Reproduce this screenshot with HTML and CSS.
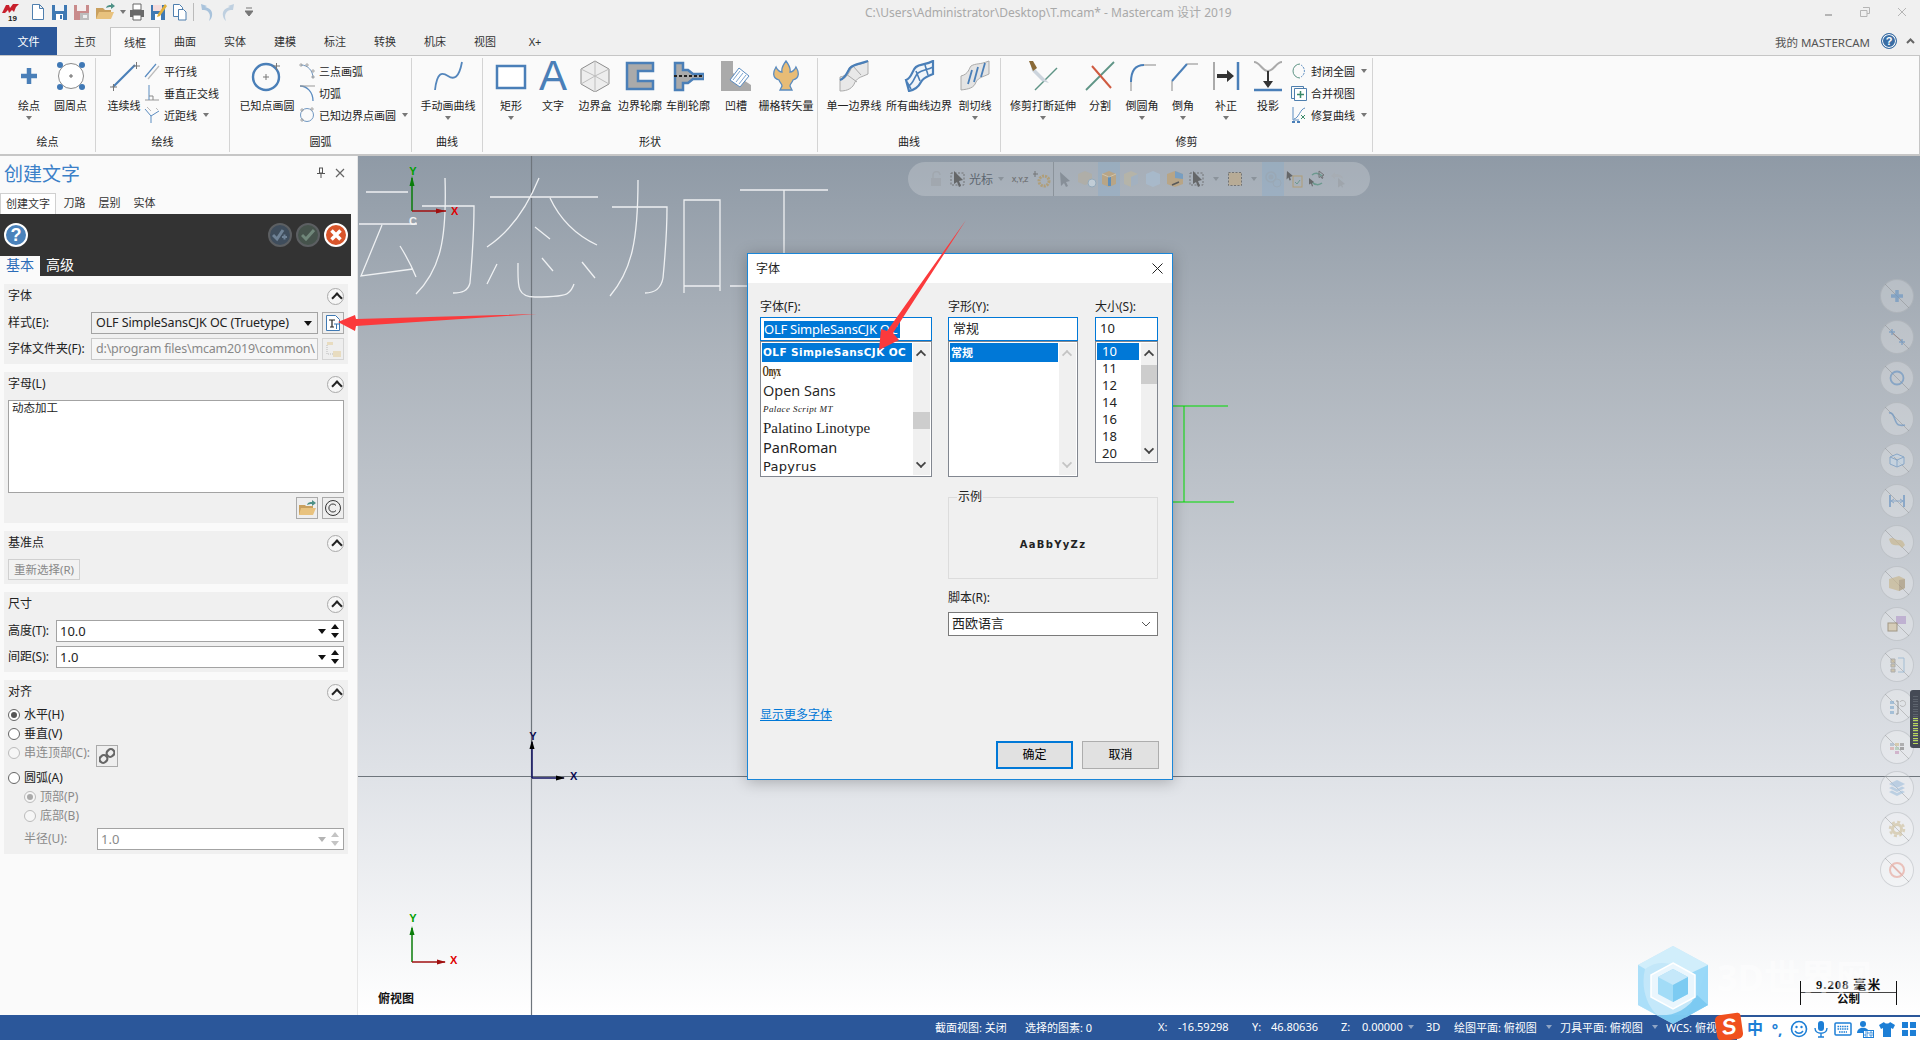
FILE: index.html
```html
<!DOCTYPE html>
<html lang="zh-CN">
<head>
<meta charset="utf-8">
<title>Mastercam</title>
<link rel="stylesheet" href="styles.css">
</head>
<body>
<div class="app">
  <header class="titlebar">
    <div class="qat">
      <svg class="logo" width="18" height="18" viewBox="0 0 18 18"><path d="M0 10 4 2h3l1 3 3-4h6l-3 3-2 5-2-2-3 3-1-3-3 3z" fill="#c8202c"/><text x="6" y="17.500" class="logo-num">19</text></svg>
      <svg width="16" height="18" viewBox="0 0 16 18"><path d="M2.500 1.500h7l4 4v11h-11z M9.500 1.500v4h4" fill="#fff" stroke="#4f7fae"/></svg>
      <svg width="17" height="18" viewBox="0 0 17 18"><path d="M1 2h15v15H1z" fill="#3f79b3"/><path d="M4 2h9v6H4z" fill="#eef3f8"/><path d="M5 11h7v6H5z" fill="#fff"/><path d="M9 12h2v4H9z" fill="#3f79b3"/></svg>
      <svg width="17" height="18" viewBox="0 0 17 18"><path d="M1 2h15v15H1z" fill="#c98b8b"/><path d="M4 2h9v6H4z" fill="#f4eeee"/><path d="M7 10h9v7H7z" fill="#bcbcbc"/><path d="M10 12h4v3h-4z" fill="#eee"/></svg>
      <svg width="20" height="18" viewBox="0 0 20 18"><path d="M1 5h7l2 2h6v9H1z" fill="#c9a05e"/><path d="M1 16 4 9h15l-3 7z" fill="#e8c27e"/><path d="M11 5c1-3 3-3 5-3V0l4 3-4 3V4c-2 0-3 0-5 1z" fill="#4d9086"/></svg>
      <i class="caret qcaret"></i>
      <svg width="16" height="18" viewBox="0 0 16 18"><path d="M4 1h8v6H4z" fill="#fff" stroke="#666"/><path d="M1 7h14v7H1z" fill="#6a6a6a"/><path d="M4 12h8v5H4z" fill="#fff" stroke="#666"/></svg>
      <svg width="17" height="18" viewBox="0 0 17 18"><path d="M1 2h14v15H1z" fill="#3f79b3"/><path d="M3 2h9v6H3z" fill="#f4dcdc"/><path d="M5 11h6v6H5z" fill="#fff"/><path d="m15 1 2 2-7 10-3 1 1-3z" fill="#e2b13c"/></svg>
      <svg width="15" height="18" viewBox="0 0 15 18"><path d="M1.500 1.500h6l3 3v9h-9z" fill="#fff" stroke="#4f7fae"/><path d="M6.500 6.500h5l2.500 2.500v8h-7.500z" fill="#fff" stroke="#4f7fae"/></svg>
      <i class="qsep"></i>
      <svg width="14" height="18" viewBox="0 0 14 18"><path d="M2 7 1 1l6 2-2 1c5 1 8 4 7 9-.4 2-1 3-3 5 1-3 1.500-6 0-8-1-2-3-3-5-3z" fill="#a9c3dc"/></svg>
      <svg class="redo" width="14" height="18" viewBox="0 0 14 18"><path d="m12 7 1-6-6 2 2 1C4 5 1 8 2 13c.4 2 1 3 3 5-1-3-1.500-6 0-8 1-2 3-3 5-3z" fill="#bfd0e0"/></svg>
      <svg class="qmore" width="8" height="10" viewBox="0 0 8 10"><path d="M1 1h6M0 4h8L4 9z" stroke="#777" fill="#777" stroke-width="1"/></svg>
    </div>
    <div class="doc-title">C:\Users\Administrator\Desktop\T.mcam* - Mastercam 设计 2019</div>
    <div class="winbtns">
      <svg width="10" height="10" viewBox="0 0 10 10"><path d="M2 8h7" stroke="#b5b5b5" stroke-width="2"/></svg>
      <svg width="10" height="10" viewBox="0 0 10 10"><path d="M3 .5h6.500v6H7M.5 3.500H7v6H.5z" fill="none" stroke="#b5b5b5"/></svg>
      <svg width="10" height="10" viewBox="0 0 10 10"><path d="m1 1 8 8M9 1 1 9" stroke="#b5b5b5"/></svg>
    </div>
  </header>

  <nav class="tabs">
    <div class="tab-file">文件</div>
    <div class="tab">主页</div><div class="tab active">线框</div><div class="tab">曲面</div><div class="tab">实体</div><div class="tab">建模</div><div class="tab">标注</div><div class="tab">转换</div><div class="tab">机床</div><div class="tab">视图</div><div class="tab">X+</div>
    <div class="tabs-right">
      <span class="my">我的 MASTERCAM</span>
      <span class="help-mini">?</span>
      <svg width="9" height="6" viewBox="0 0 9 6"><path d="M1 5 4.500 1.500 8 5" fill="none" stroke="#666" stroke-width="2"/></svg>
    </div>
  </nav>

  <section class="ribbon">
    <div class="group g1">
      <div class="items">
        <div class="big"><svg width="32" height="32" viewBox="0 0 32 32"><path d="M16 8v16M8 16h16" stroke="#4a7fb8" stroke-width="4.500"/></svg><span>绘点</span><i class="caret"></i></div>
        <div class="big"><svg width="32" height="32" viewBox="0 0 32 32"><circle cx="16" cy="16" r="12.500" fill="#fff" stroke="#8a8a8a"/><path d="M14 16h4M16 14v4" stroke="#666"/><g fill="#3f78b5"><circle cx="5" cy="5" r="3"/><circle cx="27" cy="5" r="3"/><circle cx="5" cy="27" r="3"/><circle cx="27" cy="27" r="3"/></g></svg><span>圆周点</span></div>
      </div>
      <div class="glabel">绘点</div>
    </div>
    <div class="group g2">
      <div class="items">
        <div class="big"><svg width="32" height="32" viewBox="0 0 32 32"><path d="m5 27 22-22" stroke="#4a7fb8" stroke-width="2.200"/><path d="M2 27h7M5.500 24v7M25 6h7M28.500 2v7" stroke="#777"/></svg><span>连续线</span></div>
        <div class="stack">
          <div class="sm"><svg width="16" height="18" viewBox="0 0 16 18"><path d="M1 15 12 2" stroke="#5b8cc0" stroke-width="1.200"/><path d="M4 17 15 4" stroke="#bbb" stroke-width="1.200"/></svg><span>平行线</span></div>
          <div class="sm"><svg width="16" height="18" viewBox="0 0 16 18"><path d="M1 16h14" stroke="#999"/><path d="M5 1v15" stroke="#5b8cc0"/><path d="M5 12h4v4" fill="none" stroke="#888"/></svg><span>垂直正交线</span></div>
          <div class="sm"><svg width="16" height="18" viewBox="0 0 16 18"><path d="m1 3 6 7 8-5M7 10l0 7" fill="none" stroke="#5b8cc0"/><path d="m3 1 4 4M12 2l2 2" stroke="#bbb"/></svg><span>近距线</span><i class="caret"></i></div>
        </div>
      </div>
      <div class="glabel">绘线</div>
    </div>
    <div class="group g3">
      <div class="items">
        <div class="big"><svg width="32" height="32" viewBox="0 0 32 32"><circle cx="15" cy="17" r="13" fill="none" stroke="#4a7fb8" stroke-width="2.400"/><path d="M12 17h6M15 14v6M22 6h7M25.500 3v7" stroke="#777"/></svg><span>已知点画圆</span></div>
        <div class="stack">
          <div class="sm"><svg width="16" height="18" viewBox="0 0 16 18"><path d="M2 3c7 0 12 6 12 13" fill="none" stroke="#6f97c2"/><path d="M0 3h4M2 1v4M6 3h4M8 1v4M12 9h4M14 7v4M12 15h4M14 13v4" stroke="#999" stroke-width=".8"/></svg><span>三点画弧</span></div>
          <div class="sm"><svg width="16" height="18" viewBox="0 0 16 18"><path d="M1 2c7 0 13 6 13 15" fill="none" stroke="#5b8cc0" stroke-width="1.300"/><path d="M1 2h15" stroke="#999"/></svg><span>切弧</span></div>
          <div class="sm"><svg width="16" height="18" viewBox="0 0 16 18"><circle cx="8" cy="9" r="6.500" fill="none" stroke="#6f97c2"/><path d="M1 4h4M3 2v4M11 3h4M13 1v4M1 14h4M3 12v4" stroke="#999" stroke-width=".8"/></svg><span>已知边界点画圆</span><i class="caret"></i></div>
        </div>
      </div>
      <div class="glabel">圆弧</div>
    </div>
    <div class="group g4">
      <div class="items">
        <div class="big"><svg width="32" height="32" viewBox="0 0 32 32"><path d="M3 30C5 12 10 12 16 16S27 18 30 2" fill="none" stroke="#5486bc" stroke-width="1.800"/></svg><span>手动画曲线</span><i class="caret"></i></div>
      </div>
      <div class="glabel">曲线</div>
    </div>
    <div class="group g5">
      <div class="items">
        <div class="big"><svg width="32" height="32" viewBox="0 0 32 32"><rect x="2" y="6" width="28" height="22" fill="#fff" stroke="#4a7fb8" stroke-width="2.500"/></svg><span>矩形</span><i class="caret"></i></div>
        <div class="big"><b class="letter-a">A</b><span>文字</span></div>
        <div class="big"><svg width="32" height="32" viewBox="0 0 32 32"><path d="M16 1 30 9v15l-14 8-14-8V9z" fill="#ededed" stroke="#8d8d8d"/><path d="M2 9l14 7 14-7M16 16v16M16 1v15L2 24M16 16l14 8" fill="none" stroke="#bdbdbd"/></svg><span>边界盒</span></div>
        <div class="big"><svg width="32" height="32" viewBox="0 0 32 32"><path d="M3 3h26v8H14v10h15v8H3z" fill="#aaa" stroke="#4a7fb8" stroke-width="2.500"/></svg><span>边界轮廓</span></div>
        <div class="big"><svg width="32" height="32" viewBox="0 0 32 32"><path d="M3 3h8v7h5l5 4h11v5H21l-5 4h-5v7H3z" fill="#aaa" stroke="#4a7fb8" stroke-width="2.500"/><path d="M2 16h30" stroke="#222" stroke-width="2" stroke-dasharray="3 2"/></svg><span>车削轮廓</span></div>
        <div class="big"><svg width="32" height="32" viewBox="0 0 32 32"><path d="M1 1h12v12l18 12v6H1z" fill="#aaa"/><path d="m10 20 9-12 10 8-9 11z" fill="#fff" stroke="#5b8cc0"/><path d="m13 20 7-9M16 22l7-9M19 24l7-9" stroke="#7ba5d0"/></svg><span>凹槽</span></div>
        <div class="big"><svg width="32" height="32" viewBox="0 0 32 32"><path d="M16 1c3 4 5 7 4 11 2 0 5-2 6-5 3 5 4 11-3 13-1 3-3 4-3 6l2 4H10l2-4c0-2-2-3-3-6C2 18 3 12 6 7c1 3 4 5 6 5-1-4 1-7 4-11z" fill="#e8bc76" stroke="#5b8cc0" stroke-width="1.300"/></svg><span>栅格转矢量</span></div>
      </div>
      <div class="glabel">形状</div>
    </div>
    <div class="group g6">
      <div class="items">
        <div class="big"><svg width="32" height="32" viewBox="0 0 32 32"><path d="M2 17c8-1 8-8 10-10 5-3 8-1 18-6v13c-6 3-10 3-13 8-2 6-7 9-15 9z" fill="#e8e8e8" stroke="#aaa"/><path d="M2 20c8-2 10-10 12-13s8-2 16-6M8 14l11 8M15 6l8 9" fill="none" stroke="#aaa"/><path d="M2 20c6-2 7-8 10-12 4-4 10-4 18-7" fill="none" stroke="#4a7fb8" stroke-width="2.200"/></svg><span>单一边界线</span></div>
        <div class="big"><svg width="32" height="32" viewBox="0 0 32 32"><path d="M3 20c6-2 6-10 10-13 4-3 10-2 17-6v13c-6 3-9 3-12 8-3 6-7 8-12 9z" fill="#f1f5f9" stroke="#4a7fb8" stroke-width="2.200"/><path d="M5 26c6-2 6-10 10-13 5-3 9-3 15-6M4 22l4 7M13 11l4 10M22 5l3 10" fill="none" stroke="#4a7fb8" stroke-width="1.600"/></svg><span>所有曲线边界</span></div>
        <div class="big"><svg width="32" height="32" viewBox="0 0 32 32"><path d="M2 16c8-2 8-8 10-10 5-3 8-1 18-5v13c-6 3-10 3-13 8-2 6-7 7-15 8z" fill="#e4e4e4" stroke="#aaa"/><path d="m9 24 4-14M15 22l4-15M22 17l4-14" stroke="#4a7fb8" stroke-width="1.800"/></svg><span>剖切线</span><i class="caret"></i></div>
      </div>
      <div class="glabel">曲线</div>
    </div>
    <div class="group g7">
      <div class="items">
        <div class="big"><svg width="32" height="32" viewBox="0 0 32 32"><path d="m8 30 22-22" stroke="#5e9485" stroke-width="1.500"/><path d="m3 1 4 7 15 15-7-2L5 11z" fill="#ccd4dc"/><path d="M2 1h4l4 7-4 3z" fill="#8a6a37"/></svg><span>修剪打断延伸</span><i class="caret"></i></div>
        <div class="big"><svg width="32" height="32" viewBox="0 0 32 32"><path d="M2 30 30 2" stroke="#5e9485" stroke-width="1.800"/><path d="m8 6 19 22" stroke="#cf5a40" stroke-width="2"/></svg><span>分割</span></div>
        <div class="big"><svg width="32" height="32" viewBox="0 0 32 32"><path d="M5 31V22" stroke="#888"/><path d="M5 22C5 10 10 5 18 5" fill="none" stroke="#4a7fb8" stroke-width="2"/><path d="M18 5h12" stroke="#888"/></svg><span>倒圆角</span><i class="caret"></i></div>
        <div class="big"><svg width="32" height="32" viewBox="0 0 32 32"><path d="M5 31V21" stroke="#888"/><path d="M5 21 20 4" fill="none" stroke="#4a7fb8" stroke-width="2"/><path d="M20 4h11" stroke="#888"/></svg><span>倒角</span><i class="caret"></i></div>
        <div class="big"><svg width="32" height="32" viewBox="0 0 32 32"><path d="M4 2v28" stroke="#aaa" stroke-width="2"/><path d="M28 2v28" stroke="#4a7fb8" stroke-width="2.500"/><path d="M7 14h10v-4l7 6-7 6v-4H7z" fill="#333"/></svg><span>补正</span><i class="caret"></i></div>
        <div class="big"><svg width="32" height="32" viewBox="0 0 32 32"><path d="M2 2c6 0 8 9 14 9s8-9 14-9" fill="none" stroke="#aaa" stroke-width="2"/><path d="M15 11h2v10h4l-5 7-5-7h4z" fill="#333"/><path d="M2 30h28" stroke="#4a7fb8" stroke-width="2.500"/></svg><span>投影</span></div>
        <div class="stack">
          <div class="sm"><svg width="16" height="18" viewBox="0 0 16 18"><path d="M9 2a7 7 0 1 0 0 14" fill="none" stroke="#5e9485"/><path d="M10 3a7 7 0 0 1 0 12" fill="none" stroke="#5b8cc0" stroke-dasharray="2 1"/></svg><span>封闭全圆</span><i class="caret"></i></div>
          <div class="sm"><svg width="16" height="18" viewBox="0 0 16 18"><path d="M.5 2.500h12v12H.5z" fill="none" stroke="#4f7fae"/><path d="M3.500 4.500h12v12h-12z" fill="#fff" stroke="#4f7fae"/><path d="M9.500 7v7M6 10.500h7" stroke="#3b8a6a" stroke-width="1.500"/></svg><span>合并视图</span></div>
          <div class="sm"><svg width="16" height="18" viewBox="0 0 16 18"><path d="M2 1v13h6M3 13C8 12 9 3 14 2" fill="none" stroke="#5b8cc0"/><path d="M1 15h3v2H1zM6 15h3v2H6z" fill="#4a7fb8"/><path d="m10 9 4 4M14 9l-4 4" stroke="#3b8a6a"/></svg><span>修复曲线</span><i class="caret"></i></div>
        </div>
      </div>
      <div class="glabel">修剪</div>
    </div>
  </section>

  <main class="main">
    <aside class="panel">
      <div class="panel-head">
        <h1>创建文字</h1>
        <svg width="10" height="12" viewBox="0 0 10 12"><path d="M3 1h4M3.500 1v5h3V1M1 6.500h8M5 7v4" fill="none" stroke="#555"/></svg>
        <svg width="10" height="10" viewBox="0 0 10 10"><path d="m1 1 8 8M9 1 1 9" stroke="#666" stroke-width="1.200"/></svg>
      </div>
      <div class="panel-tabs"><span class="ptab on">创建文字</span><span class="ptab">刀路</span><span class="ptab">层别</span><span class="ptab">实体</span></div>
      <div class="darkbar">
        <div class="dark-top">
          <span class="round help">?</span>
          <span class="round muted blue"><svg width="16" height="14" viewBox="0 0 16 14"><path d="m1 7 4 4 6-9" fill="none" stroke="#6f8296" stroke-width="3"/><path d="M10 9h5M12.500 6.500v5" stroke="#6f8296" stroke-width="2"/></svg></span>
          <span class="round muted green"><svg width="14" height="12" viewBox="0 0 14 12"><path d="m1 6 4 4 8-9" fill="none" stroke="#70877a" stroke-width="3"/></svg></span>
          <span class="round cancel"><svg width="12" height="12" viewBox="0 0 12 12"><path d="m1.500 1.500 9 9M10.500 1.500l-9 9" stroke="#fff" stroke-width="3.500"/></svg></span>
        </div>
        <div class="dark-tabs"><span class="dtab on">基本</span><span class="dtab">高级</span></div>
      </div>

      <div class="sec">
        <div class="sec-h"><span>字体</span><i class="collapse"></i></div>
        <div class="row"><label class="lab l83">样式(E):</label><div class="combo"><span>OLF SimpleSansCJK OC (Truetype)</span><i class="tri"></i></div>
          <button class="ibtn"><svg width="16" height="16" viewBox="0 0 16 16"><path d="M1.500.500h9l4 4v11h-13z" fill="#fff" stroke="#3f79b3"/><path d="M4 5h6M7 5v7M5 12h4" stroke="#222" stroke-width="1.200"/><path d="M9 9h5M11.500 9v5" stroke="#3f79b3"/></svg></button></div>
        <div class="row"><label class="lab l83">字体文件夹(F):</label><div class="field dis"><span>d:\program files\mcam2019\common\</span></div>
          <button class="ibtn off"><svg width="18" height="18" viewBox="0 0 18 18"><path d="M3 2h6v3H3zM9 11h8v6H9z" fill="#e8dcc0"/><path d="M3 5v9h6" fill="none" stroke="#bbb" stroke-dasharray="1 1"/></svg></button></div>
      </div>

      <div class="sec">
        <div class="sec-h"><span>字母(L)</span><i class="collapse"></i></div>
        <div class="textarea">动态加工</div>
        <div class="row end">
          <button class="ibtn"><svg width="18" height="16" viewBox="0 0 18 16"><path d="M1 5h6l1 1h7v9H1z" fill="#c9a05e"/><path d="M1 15 3 8h15l-3 7z" fill="#e8c27e"/><path d="M9 5c1-3 3-3 5-3V0l4 3-4 3V4c-2 0-3 0-5 1z" fill="#4d9086"/></svg></button>
          <button class="ibtn"><svg width="18" height="18" viewBox="0 0 18 18"><circle cx="9" cy="9" r="7.500" fill="none" stroke="#333"/><path d="M12 6.500A4 4 0 1 0 12 11.500" fill="none" stroke="#333"/></svg></button>
        </div>
      </div>

      <div class="sec">
        <div class="sec-h"><span>基准点</span><i class="collapse"></i></div>
        <button class="reselect">重新选择(R)</button>
      </div>

      <div class="sec">
        <div class="sec-h"><span>尺寸</span><i class="collapse"></i></div>
        <div class="row"><label class="lab l48">高度(T):</label><div class="field spin"><span>10.0</span><i class="tri"></i><i class="updown"></i></div></div>
        <div class="row"><label class="lab l48">间距(S):</label><div class="field spin"><span>1.0</span><i class="tri"></i><i class="updown"></i></div></div>
      </div>

      <div class="sec">
        <div class="sec-h"><span>对齐</span><i class="collapse"></i></div>
        <div class="radio r-first"><i class="dot on"></i>水平(H)</div>
        <div class="radio"><i class="dot"></i>垂直(V)</div>
        <div class="radio chain gray"><i class="dot dim"></i>串连顶部(C):
          <button class="ibtn chainbtn"><svg width="16" height="16" viewBox="0 0 16 16"><g fill="none" stroke="#666" stroke-width="2.200"><rect x="8" y="1" width="7" height="8" rx="3.500" transform="rotate(45 11.500 5)"/><rect x="1" y="7" width="7" height="8" rx="3.500" transform="rotate(45 4.500 11)"/></g></svg></button></div>
        <div class="radio r-arc"><i class="dot"></i>圆弧(A)</div>
        <div class="radio sub gray"><i class="dot dim on"></i>顶部(P)</div>
        <div class="radio sub gray"><i class="dot dim"></i>底部(B)</div>
        <div class="row radius"><label class="lab l73 gray">半径(U):</label><div class="field spin faded"><span>1.0</span><i class="tri"></i><i class="updown"></i></div></div>
      </div>
    </aside>

    <div class="viewport">
      <svg class="scene" width="1562" height="859" viewBox="358 156 1562 859">
        <path d="M531.500 155V1015M358 776.500H1920" stroke="#6e757c" stroke-width="1.200" fill="none"/>
        <g fill="none" stroke="#eef0f2" stroke-width="1.300">
          <path d="M366 192h42M359 224h58M382 225l-21 51 52-7M400 246q10 16 16 31M422 206h52c0 20-2 54-4 77-2 8-8 10-17 10M445 178c2 62-5 92-29 116"/>
          <path d="M490 197h108M539 178q-19 47-52 69M550 198q15 32 47 47M535 227l15 12M542 258l11 13M497 264l-10 20M518 263c0 22-2 34 17 34 15 0 30-1 33-4 4-3 6-9 6-9M582 262l13 16"/>
          <path d="M612 207h55c0 22-2 50-4 71-2 11-8 15-18 15M638 180c0 60-6 90-28 116M684 293v-93h36v91M684 286h36"/>
          <path d="M740 190h88M784 190v110M730 286h70"/>
        </g>
        <path d="M1173 406h55M1173 502h61M1184 406v96" stroke="#00dd00" fill="none"/>
        <g class="axes">
          <path d="M412 211v-33" stroke="#0a7d0a" stroke-width="1.500"/><path d="m412 176-2.500 10h5z" fill="#0a7d0a"/>
          <path d="M412 211h34" stroke="#a01010" stroke-width="1.500"/><path d="m446 211-10-2.500v5z" fill="#a01010"/>
          <text x="413" y="175" class="ax g" text-anchor="middle">Y</text><text x="451" y="215" class="ax r">X</text>
          <text x="409" y="225" class="ax w">C</text>
        </g>
        <g>
          <path d="M532 778v-36" stroke="#101060" stroke-width="1.500"/><path d="m532 740-2.500 9h5z" fill="#000"/>
          <path d="M532 778h32" stroke="#101060" stroke-width="1.500"/><path d="m565 778-9-2.500v5z" fill="#000"/>
          <text x="533" y="740" class="ax n" text-anchor="middle">Y</text><text x="570" y="780" class="ax n">X</text>
        </g>
        <g>
          <path d="M412 962v-34" stroke="#0a7d0a" stroke-width="1.500"/><path d="m412 926-2.500 9h5z" fill="#0a7d0a"/>
          <path d="M412 962h33" stroke="#a01010" stroke-width="1.500"/><path d="m446 962-9-2.500v5z" fill="#a01010"/>
          <text x="413" y="922" class="ax g" text-anchor="middle">Y</text><text x="450" y="964" class="ax r">X</text>
        </g>
        <text x="378" y="1003" class="viewname">俯视图</text>
      </svg>

      <div class="pill">
        <span class="slot"><svg width="14" height="16" viewBox="0 0 14 16"><path d="M2 7h10v8H2z" fill="#a0a6ad"/><path d="M4 7V4a3.500 3.500 0 0 1 7 0" fill="none" stroke="#a0a6ad" stroke-width="1.500"/></svg></span>
        <span class="slot"><svg width="16" height="18" viewBox="0 0 16 18"><rect x="1" y="3" width="13" height="12" fill="none" stroke="#666" stroke-dasharray="2 1.500"/><path d="m4 1 9 9-4 1 2 5-2 1-2-5-3 2z" fill="#555"/></svg></span>
        <span class="pill-text">光标</span><i class="caret pillcaret"></i>
        <span class="slot xyz">X,Y,Z</span>
        <span class="slot"><svg width="18" height="18" viewBox="0 0 18 18"><path d="M2 1v6M-1 4h6" stroke="#666"/><circle cx="11" cy="11" r="5" fill="none" stroke="#b39a68" stroke-width="3" stroke-dasharray="2 1"/></svg></span>
        <i class="pill-sep"></i>
        <span class="slot"><svg width="12" height="16" viewBox="0 0 12 16"><path d="m1 1 10 9-4 1 2 4-2 1-2-4-3 3z" fill="#7f8790"/></svg></span>
        <span class="slot"><svg width="20" height="18" viewBox="0 0 20 18"><path d="m8 1 7 3v8l-7 3-7-3V4z" fill="#b1aea4"/><circle cx="15" cy="13" r="4" fill="#c8d4de" stroke="#8fa8ba"/></svg></span>
        <span class="slot hl"><svg width="16" height="18" viewBox="0 0 16 18"><path d="m8 1 7 3v10l-7 3-7-3V4z" fill="#bda37a"/><path d="M7 6h3v10H7z" fill="#4f86b8"/><path d="M1 4l7 3 7-3" fill="none" stroke="#d8c8a8"/></svg></span>
        <span class="slot"><svg width="16" height="18" viewBox="0 0 16 18"><path d="m8 1 7 3v10l-7 3-7-3V4z" fill="#b9b5a5"/><path d="m8 7 7-3v10l-7 3z" fill="#a2b2c2"/></svg></span>
        <span class="slot"><svg width="16" height="18" viewBox="0 0 16 18"><path d="m8 1 7 3v10l-7 3-7-3V4z" fill="#a8bccf"/></svg></span>
        <span class="slot"><svg width="18" height="18" viewBox="0 0 18 18"><path d="m9 1 8 3v10l-8 3-8-3V4z" fill="#bda37a"/><path d="m9 1 8 3v5l-8-1z" fill="#6d9ac3"/><path d="m6 15 7-3" stroke="#444" stroke-width="1.500"/></svg></span>
        <span class="slot"><svg width="16" height="18" viewBox="0 0 16 18"><rect x="1" y="3" width="13" height="12" fill="none" stroke="#666" stroke-dasharray="2 1.500"/><path d="m4 1 9 9-4 1 2 5-2 1-2-5-3 2z" fill="#555"/></svg></span>
        <i class="caret pillcaret"></i>
        <span class="slot"><svg width="16" height="16" viewBox="0 0 16 16"><rect x="1.500" y="1.500" width="13" height="13" fill="#bcab8e" stroke="#666" stroke-dasharray="2 1.500"/></svg></span>
        <i class="caret pillcaret"></i>
        <span class="slot hl"><svg width="18" height="18" viewBox="0 0 18 18"><circle cx="7" cy="7" r="5" fill="none" stroke="#97a7b5" stroke-width="1.500"/><circle cx="7" cy="7" r="2.500" fill="#97a7b5"/><circle cx="13" cy="13" r="4" fill="none" stroke="#97a7b5"/></svg></span>
        <span class="slot"><svg width="18" height="18" viewBox="0 0 18 18"><path d="m1 1 6 5-3 1 1 3-1.500.5-1-3-2 2z" fill="#555"/><rect x="7" y="6" width="9" height="11" fill="none" stroke="#b39a68"/><path d="m9 12 2 2 3-4" fill="none" stroke="#5e9485"/></svg></span>
        <span class="slot"><svg width="18" height="18" viewBox="0 0 18 18"><path d="M4 5a7 7 0 0 1 10 1M14 13a7 7 0 0 1-10-1" fill="none" stroke="#5e9485" stroke-width="1.500"/><path d="m1 8 5 4-2 1 1 3-1 .5-1-3-2 1z" fill="#555"/><path d="m11 1 5 4-2 1 1 2-1 .5-1-2-2 1z" fill="none" stroke="#666"/></svg></span>
        <span class="slot"><svg width="18" height="18" viewBox="0 0 18 18"><path d="M1 6 5 2v2c5 0 8 2 8 5-2-2-4-2-8-2v2z" fill="#a7adb3"/><path d="m8 8 7 6-3 1 1 2-1 .5-1-2-3 2z" fill="#9da3a9"/></svg></span>
      </div>

      <div class="dock">
        <span class="dk"><svg width="18" height="18" viewBox="0 0 18 18"><path d="M9 3v12M3 9h12" stroke="#6f97c2" stroke-width="3.500"/></svg></span>
        <span class="dk"><svg width="18" height="18" viewBox="0 0 18 18"><path d="m3 4 12 10" stroke="#8e7b7b"/><path d="M1 4h6M4 1v6M11 14h6M14 11v6" stroke="#6f97c2" stroke-width="1.500"/></svg></span>
        <span class="dk"><svg width="18" height="18" viewBox="0 0 18 18"><circle cx="9" cy="9" r="6.500" fill="none" stroke="#6f97c2" stroke-width="1.800"/></svg></span>
        <span class="dk"><svg width="18" height="18" viewBox="0 0 18 18"><path d="M1 3c6-2 5 11 10 12 2 .5 4 .5 6 0" fill="none" stroke="#6f97c2" stroke-width="1.600"/></svg></span>
        <span class="dk"><svg width="18" height="18" viewBox="0 0 18 18"><path d="m2 6 7-3 7 3v7l-7 3-7-3zM2 6l7 3 7-3M9 9v7" fill="#c4d4e3" stroke="#6f97c2"/></svg></span>
        <span class="dk"><svg width="18" height="18" viewBox="0 0 18 18"><path d="M2 3v12M16 3v12" stroke="#6f97c2" stroke-width="2"/><path d="M3 9h12M6 7 3 9l3 2M12 7l3 2-3 2" stroke="#6f97c2" fill="none"/></svg></span>
        <span class="dk"><svg width="18" height="18" viewBox="0 0 18 18"><path d="M1 6c4-3 6 1 9 1s4-1 7 5l-3 3c-3-4-5-2-8-3s-3-1-5-6z" fill="#c8b791"/></svg></span>
        <span class="dk"><svg width="18" height="18" viewBox="0 0 18 18"><path d="M1 5 11 2l6 3v9l-6 3-10-3z" fill="#c8b791"/><path d="m11 6 6-1v9l-6 3z" fill="#a9987a"/></svg></span>
        <span class="dk"><svg width="20" height="18" viewBox="0 0 20 18"><rect x="9" y="1" width="10" height="8" fill="#b5a0cc"/><rect x="1" y="8" width="9" height="8" fill="#d4c6a8" stroke="#8a7a5e"/></svg></span>
        <span class="dk"><svg width="18" height="18" viewBox="0 0 18 18"><path d="M3 3h4v4H3zM3 8h4v3H3zM3 13h4v3H3z" fill="#c8b791" stroke="#999"/><path d="M10 2h6v14h-6" fill="none" stroke="#8db0d0"/></svg></span>
        <span class="dk"><svg width="18" height="18" viewBox="0 0 18 18"><path d="M2 4h4v3H2zM2 9h4v3H2zM2 14h4v3H2z" fill="#8db0d0"/><path d="M8 4h2v13H8" fill="none" stroke="#777"/><path d="M12 5a3 3 0 1 1 0 3" fill="none" stroke="#aaa"/></svg></span>
        <span class="dk"><svg width="18" height="18" viewBox="0 0 18 18"><g><path d="M2 5h4v3H2z" fill="#a9b8c8"/><path d="M7 5h4v3H7z" fill="#d0bf98"/><path d="M12 5h4v3h-4z" fill="#999"/><path d="M2 9h4v3H2z" fill="#d6a8a8"/><path d="M7 9h4v3H7z" fill="#a9c8b0"/><path d="M12 9h4v3h-4z" fill="#888"/><path d="M7 13h4v3H7z" fill="#c9a0c0"/></g></svg></span>
        <span class="dk"><svg width="20" height="18" viewBox="0 0 20 18"><path d="m10 1 8 4-8 4-8-4zM2 9l8 4 8-4-3-1.500-5 2.500-5-2.500zM2 13l8 4 8-4-3-1.500-5 2.500-5-2.500z" fill="#a9c4de"/></svg></span>
        <span class="dk"><svg width="18" height="18" viewBox="0 0 18 18"><circle cx="9" cy="9" r="4.500" fill="none" stroke="#d2c4a4" stroke-width="3"/><circle cx="9" cy="9" r="7" fill="none" stroke="#d2c4a4" stroke-width="2.500" stroke-dasharray="3 2.500"/></svg></span>
        <span class="dk"><svg width="18" height="18" viewBox="0 0 18 18"><circle cx="9" cy="9" r="7" fill="none" stroke="#e8ada3" stroke-width="2"/><path d="m4 4 10 10" stroke="#e8ada3" stroke-width="2"/></svg></span>
      </div>
      <div class="meter"><i></i></div>

      <div class="scale">
        <div class="s-top">9.208 毫米</div>
        <div class="s-bot">公制</div>
      </div>
    </div>
  </main>

  <footer class="status">
    <span></span><span>截面视图: 关闭</span><span>选择的图素: 0</span><span>X:</span><span>-16.59298</span><span>Y:</span><span>46.80636</span><span>Z:</span><span>0.00000</span><span><i class="caret light"></i></span><span>3D</span><span>绘图平面: 俯视图</span><span><i class="caret light"></i></span><span>刀具平面: 俯视图</span><span><i class="caret light"></i></span><span>WCS: 俯视</span>
  </footer>

  <div class="mark">
    <svg width="72" height="80" viewBox="0 0 72 80">
      <path d="M36 1 71 20v40L36 79 1 60V20z" fill="#b5e2f9" opacity=".8"/>
      <path d="M36 1 71 20 60 52C58 36 50 26 36 20 28 17 18 17 8 24L1 20z" fill="#d3eefb" opacity=".9"/>
      <path d="M71 20V60L48 73C56 60 60 42 54 28z" fill="#93d6f7" opacity=".9"/>
      <path d="M71 60 36 79 20 70C34 72 50 66 60 50z" fill="#79c9f1" opacity=".9"/>
      <path d="M8 24C4 40 8 58 20 70L36 79 1 60V20z" fill="#a8def8" opacity=".9"/>
      <path d="M36 18 58 30V52L36 64 14 52V30z" fill="#eaf6fd" stroke="#fff" stroke-width="1.500"/>
      <path d="M36 24 51 32V49L36 57 21 49V32z" fill="#a2dcf7"/>
      <path d="M36 24 51 32 36 40 21 32z" fill="#c5e8fa"/>
      <path d="M36 40 51 32V49L36 57z" fill="#7ccbf2"/>
    </svg>
    <span>3D世界网</span>
  </div>

  <div class="ime">
    <span class="sogou">S</span>
    <div class="ime-bar">
      <span class="ime-zh">中</span>
      <span class="ime-pt">°,</span>
      <svg width="18" height="18" viewBox="0 0 18 18"><circle cx="9" cy="9" r="7.500" fill="none" stroke="#1d7fd6" stroke-width="1.600"/><circle cx="6.500" cy="7" r="1.200" fill="#1d7fd6"/><circle cx="11.500" cy="7" r="1.200" fill="#1d7fd6"/><path d="M5 11c2 3 6 3 8 0" fill="none" stroke="#1d7fd6" stroke-width="1.400"/></svg>
      <svg width="18" height="18" viewBox="0 0 18 18"><rect x="6" y="1" width="6" height="10" rx="3" fill="#1d7fd6"/><path d="M3 8c0 7 12 7 12 0M9 13v4M6 17h6" fill="none" stroke="#1d7fd6" stroke-width="1.400"/></svg>
      <svg width="18" height="18" viewBox="0 0 18 18"><rect x="1" y="3" width="16" height="12" rx="1" fill="none" stroke="#1d7fd6" stroke-width="1.500"/><path d="M3.500 6.500h11M3.500 9h11M5 12h8" stroke="#1d7fd6" stroke-width="1.300" stroke-dasharray="1.500 .8"/></svg>
      <svg width="18" height="18" viewBox="0 0 18 18"><circle cx="7" cy="4" r="3" fill="#1d7fd6"/><path d="M1 13c0-7 12-7 12 0z" fill="#1d7fd6"/><rect x="7" y="10" width="11" height="8" fill="#1d7fd6"/><rect x="8" y="11" width="9" height="6" fill="#fff"/><path d="M9 12h3v2H9v2h3M14 12h2v4h-2z" fill="none" stroke="#1d7fd6" stroke-width=".8"/></svg>
      <svg width="18" height="18" viewBox="0 0 18 18"><path d="M6 2 1 5l2 4 2-1v9h8V8l2 1 2-4-5-3c-1 2-5 2-6 0z" fill="#1d7fd6"/></svg>
      <svg width="18" height="18" viewBox="0 0 18 18"><path d="M2 2h6v6H2zM10 2h6v6h-6zM2 10h6v6H2zM10 10h6v6h-6z" fill="#1d7fd6"/></svg>
    </div>
  </div>

  <div class="dialog">
    <div class="dlg-title"><span>字体</span><svg width="11" height="11" viewBox="0 0 11 11"><path d="m.5.500 10 10M10.500.500l-10 10" stroke="#222"/></svg></div>
    <div class="dlg-body">
      <div class="dlg-cols">
        <div class="col c1">
          <label>字体(F):</label>
          <div class="dinput"><span class="sel-text">OLF SimpleSansCJK OC</span></div>
          <div class="dlist h136">
            <div class="rows">
              <div class="it cur garble">OLF SimpleSansCJK OC</div>
              <div class="it onyx">Onyx</div>
              <div class="it open">Open Sans</div>
              <div class="it script">Palace Script MT</div>
              <div class="it pala">Palatino Linotype</div>
              <div class="it pan">PanRoman</div>
              <div class="it papy">Papyrus</div>
            </div>
            <div class="sb"><i class="ch up"></i><i class="thumb th1"></i><i class="ch down"></i></div>
          </div>
        </div>
        <div class="col c2">
          <label>字形(Y):</label>
          <div class="dinput"><span>常规</span></div>
          <div class="dlist h136">
            <div class="rows"><div class="it cur style">常规</div></div>
            <div class="sb dim"><i class="ch up"></i><i class="ch down"></i></div>
          </div>
        </div>
        <div class="col c3">
          <label>大小(S):</label>
          <div class="dinput"><span>10</span></div>
          <div class="dlist h122">
            <div class="rows size"><div class="it cur">10</div><div class="it">11</div><div class="it">12</div><div class="it">14</div><div class="it">16</div><div class="it">18</div><div class="it">20</div></div>
            <div class="sb"><i class="ch up"></i><i class="thumb th2"></i><i class="ch down"></i></div>
          </div>
        </div>
      </div>
      <div class="dlg-lower">
        <fieldset class="sample"><legend>示例</legend><div>AaBbYyZz</div></fieldset>
        <label class="script-l">脚本(R):</label>
        <div class="dinput gray-b"><span>西欧语言</span><svg width="10" height="6" viewBox="0 0 10 6"><path d="m1 1 4 4 4-4" fill="none" stroke="#555"/></svg></div>
      </div>
      <a class="more">显示更多字体</a>
      <div class="dlg-btns"><button class="dbtn ok">确定</button><button class="dbtn">取消</button></div>
    </div>
  </div>

  <svg class="annot" width="1920" height="1040" viewBox="0 0 1920 1040">
    <path d="m537 314-181 5-1-4-17 7 17 9 1-5z" fill="#fb3a3c"/>
    <path d="m966 220-73 113 6 7-20 10 2-21 6 2z" fill="#fb3a3c"/>
  </svg>
</div>
</body>
</html>
```
FILE: styles.css
```css
* { box-sizing: border-box; }
html, body { margin: 0; padding: 0; height: 100%; overflow: hidden; }
body { font-family: "Noto Sans", "Noto Sans CJK SC", sans-serif; font-size: 11px; color: #222; }
button { font: inherit; padding: 0; }
label { display: block; }
i { display: block; font-style: normal; }
.app { position: relative; width: 1920px; height: 1040px; display: flex; flex-direction: column; background: #f0f0f0; overflow: hidden; }

/* title bar */
.titlebar { height: 27px; display: flex; align-items: center; padding: 0 0 3px 2px; flex: none; }
.qat { display: flex; align-items: center; gap: 5px; width: 863px; }
.qat .logo { margin-right: 5px; }
.logo-num { font: bold 8px "Liberation Sans", sans-serif; fill: #222; }
.qcaret { margin: 0 -2px 0 0; }
.qsep { width: 1px; height: 18px; background: #bbb; margin: 0 1px; }
.redo { margin-left: 2px; }
.qmore { margin-left: 5px; }
.doc-title { color: #a9a9a9; font-size: 12px; width: 340px; white-space: nowrap; }
.winbtns { margin-left: auto; display: flex; gap: 27px; padding-right: 13px; }
.caret { display: inline-block; width: 0; height: 0; border-left: 3px solid transparent; border-right: 3px solid transparent; border-top: 4px solid #777; }

/* tabs */
.tabs { height: 28px; display: flex; flex: none; position: relative; }
.tab-file { width: 57px; margin-right: 3px; background: #2b579a; color: #fff; display: flex; align-items: center; justify-content: center; }
.tab { width: 50px; display: flex; align-items: center; justify-content: center; color: #333; }
.tab.active { background: #fafafa; border: 1px solid #c6c6c6; border-bottom: 0; height: 29px; z-index: 1; }
.tabs-right { margin-left: auto; display: flex; align-items: center; padding-right: 5px; }
.my { color: #555; font-size: 11.500px; margin-right: 11px; padding-top: 2px; }
.help-mini { width: 16px; height: 16px; border-radius: 50%; background: #3a6ea5; border: 1px solid #3a6ea5; box-shadow: inset 0 0 0 1px #fff; color: #fff; font: bold 11px/14px "Liberation Sans", sans-serif; text-align: center; margin-right: 9px; }

/* ribbon */
.ribbon { height: 101px; flex: none; display: flex; background: #fafafa; border-top: 1px solid #c6c6c6; border-bottom: 2px solid #c6c6c6; border-right: 1px solid #c6c6c6; padding-top: 2px; }
.group { display: flex; flex-direction: column; height: 94px; border-right: 1px solid #d4d4d4; flex: none; }
.g1 { width: 96px; } .g2 { width: 134px; } .g3 { width: 182px; } .g4 { width: 71px; } .g5 { width: 335px; } .g6 { width: 183px; } .g7 { width: 372px; }
.items { display: grid; padding-top: 2px; }
.g1 .items { grid-template-columns: 42px 41px; padding-left: 8px; }
.g2 .items { grid-template-columns: 40px auto; padding-left: 8px; }
.g3 .items { grid-template-columns: 60px auto; padding-left: 7px; }
.g4 .items { grid-template-columns: 62px; padding-left: 5px; }
.g5 .items { grid-template-columns: 42px 42px 42px 48px 48px 48px 52px; padding-left: 7px; }
.g6 .items { grid-template-columns: 58px 72px 40px; padding-left: 7px; }
.g7 .items { grid-template-columns: 70px 44px 40px 42px 44px 40px auto; padding-left: 7px; }
.big { display: flex; flex-direction: column; align-items: center; white-space: nowrap; }
.big > span { line-height: 16px; margin-top: 6px; }
.big > .caret { margin-top: 2px; }
.letter-a { height: 32px; font: 42px/32px "Liberation Sans", sans-serif; color: #4a7fb8; }
.stack { display: flex; flex-direction: column; }
.sm { height: 22px; display: flex; align-items: center; gap: 4px; white-space: nowrap; }
.sm .caret { margin-left: 2px; }
.g3 .stack { padding-left: 2px; }
.g7 .stack { padding-left: 3px; }
.glabel { margin-top: auto; text-align: center; line-height: 16px; padding-bottom: 2px; }

/* main */
.main { flex: 1; display: flex; min-height: 0; }
.panel { width: 358px; flex: none; background: #fafafa; padding-right: 6px; border-right: 1px solid #e6e6e6; }
.panel-head { height: 37px; display: flex; align-items: center; padding: 0 6px 3px 4px; gap: 9px; }
.panel-head h1 { margin: 0 auto 0 0; font-size: 19px; font-weight: 400; color: #3b80c8; }
.panel-tabs { height: 21px; display: flex; }
.ptab { width: 35px; text-align: center; line-height: 19px; font-size: 11px; color: #333; }
.ptab.on { width: 56px; margin-right: 1px; background: #fff; border: 1px solid #d0d0d0; border-bottom: 0; line-height: 20px; }
.darkbar { height: 62px; background: #333; display: flex; flex-direction: column; }
.dark-top { display: flex; align-items: center; height: 42px; padding: 0 3px 0 4px; gap: 4px; }
.round { width: 24px; height: 24px; border-radius: 50%; display: flex; align-items: center; justify-content: center; border: 2px solid #ccc; }
.round.help { background: #4a82bb; color: #fff; font: bold 18px/20px "Liberation Sans", sans-serif; border-color: #fff; margin-right: auto; }
.round.muted { border-color: #5c5f62; }
.round.blue { background: #3f4d5c; }
.round.green { background: #46534c; }
.round.cancel { background: #d9552b; border-color: #fff; }
.dark-tabs { display: flex; height: 20px; font-size: 14px; line-height: 18px; color: #fff; }
.dtab { width: 34px; text-align: center; margin-left: 2px; }
.dtab.on { width: 40px; margin-left: 0; background: #fafafa; color: #2b6cb8; }
.dtab + .dtab { margin-left: 2px; width: 36px; }

.sec { background: #f0f0f0; margin: 8px 4px 0; padding: 0 4px 4px; width: 344px; }
.sec-h { height: 24px; display: flex; align-items: center; justify-content: space-between; font-size: 12px; }
.sec-h span { padding-bottom: 2px; }
.collapse { width: 17px; height: 17px; border-radius: 50%; border: 1px solid #aaa; background: #f6f6f6; position: relative; }
.collapse::after { content: ""; position: absolute; left: 4.500px; top: 5.500px; width: 6px; height: 6px; border-left: 2px solid #222; border-top: 2px solid #222; transform: rotate(45deg); }
.row { display: flex; align-items: center; height: 22px; margin-top: 4px; gap: 4px; }
.row.end { justify-content: flex-end; }
.lab { flex: none; margin-right: -4px; font-size: 12px; white-space: nowrap; padding-bottom: 2px; }
.l83 { width: 83px; } .l48 { width: 48px; } .l73 { width: 73px; }
.combo, .field { flex: 1; height: 22px; display: flex; align-items: center; padding: 0 4px; border: 1px solid #a3a3a3; font-size: 12.500px; letter-spacing: -.1px; white-space: nowrap; overflow: hidden; min-width: 0; }
.combo { background: #f0f0f0; justify-content: space-between; padding-right: 5px; }
.combo span, .field span { padding-bottom: 1px; }
.field { background: #fff; }
.field.dis { background: #f6f6f6; color: #888; border-color: #c8c8c8; letter-spacing: -.2px; }
.tri { width: 0; height: 0; border-left: 4px solid transparent; border-right: 4px solid transparent; border-top: 5px solid #111; flex: none; }
.ibtn { width: 22px; height: 22px; flex: none; background: #eee; border: 1px solid #aaa; display: flex; align-items: center; justify-content: center; }
.ibtn.off { border-color: #d4d4d4; }
.textarea { height: 93px; margin-top: 4px; background: #fff; border: 1px solid #a3a3a3; padding: 0 3px; font-size: 11.500px; line-height: 14px; }
.reselect { height: 21px; width: 72px; margin: 4px 0 0; display: block; color: #888; background: #f2f2f2; border: 1px solid #d0d0d0; font-size: 11.500px; line-height: 17px; white-space: nowrap; }
.spin { padding-left: 3px; padding-right: 0; font-size: 13px; letter-spacing: 0; }
.spin .tri { margin-left: auto; margin-right: 2px; border-top-color: #111; }
.updown { width: 14px; height: 18px; flex: none; margin-right: 1px; position: relative; }
.updown::before, .updown::after { content: ""; position: absolute; left: 3px; width: 0; height: 0; border-left: 4px solid transparent; border-right: 4px solid transparent; }
.updown::before { top: 2px; border-bottom: 5px solid #111; }
.updown::after { bottom: 2px; border-top: 5px solid #111; }
.faded { color: #8a8a8a; }
.faded .tri { border-top-color: #b4b4b4; }
.faded .updown::before { border-bottom-color: #c4c4c4; }
.faded .updown::after { border-top-color: #c4c4c4; }
.radius { margin-top: 2px; padding-left: 16px; }
.radio { display: flex; align-items: center; gap: 4px; height: 19px; font-size: 12px; line-height: 16px; padding-bottom: 1px; white-space: nowrap; }
.r-first { margin-top: 2px; }
.chain { height: 23px; align-items: flex-start; line-height: 17px; }
.chain .dot { margin-top: 3px; }
.chainbtn { margin: 1px 0 0 2px; }
.r-arc { margin-top: 2px; }
.sub { padding-left: 16px; }
.gray { color: #8a8a8a; }
.dot { width: 12px; height: 12px; border-radius: 50%; border: 1px solid #666; background: #fff; flex: none; position: relative; }
.dot.on::after { content: ""; position: absolute; left: 2px; top: 2px; width: 6px; height: 6px; border-radius: 50%; background: #555; }
.dot.dim { border-color: #bbb; background: #f6f6f6; }
.dot.dim.on::after { background: #aaa; }

/* viewport */
.viewport { flex: 1; position: relative; overflow: hidden; background: linear-gradient(#8f9aa6 0, #adb4bc 23%, #dfe2e7 72%, #ffffff 100%); }
.scene { position: absolute; left: 0; top: 0; }
.ax { font: bold 11px "Liberation Sans", sans-serif; }
.ax.g { fill: #00a000; } .ax.r { fill: #e00000; } .ax.w { fill: #f2f2f2; } .ax.n { fill: #0a0a50; }
.viewname { font-size: 12px; font-weight: 700; fill: #111; }
.pill { position: absolute; left: 550px; top: 6px; width: 462px; height: 34px; border-radius: 17px; background: rgba(255,255,255,.2); display: flex; align-items: center; padding-left: 17px; }
.slot { width: 22px; height: 34px; display: flex; align-items: center; justify-content: center; flex: none; opacity: .8; }
.slot.hl { background: rgba(110,170,215,.28); }
.slot.xyz { font: 700 7px "Liberation Sans", sans-serif; color: #666; white-space: nowrap; }
.pill-text { font-size: 12px; color: #5d6670; width: 24px; white-space: nowrap; }
.pillcaret { margin: 0 5px; border-top-color: #8b939b; }
.pill-sep { width: 1px; height: 34px; background: #8b939b; }
.dock { position: absolute; right: 6px; top: 123px; display: flex; flex-direction: column; gap: 7px; }
.dk { width: 34px; height: 34px; border-radius: 50%; display: flex; align-items: center; justify-content: center; border: 1px solid rgba(150,155,160,.35); background: linear-gradient(to top right, transparent 49%, rgba(110,110,110,.32) 49.500%, rgba(110,110,110,.32) 50.500%, transparent 51%), rgba(255,255,255,.24); }
.dk svg { opacity: .7; }
.meter { position: absolute; right: 0; top: 534px; width: 10px; height: 58px; background: #454a55; border-radius: 3px 0 0 3px; padding: 6px 2px 4px 3px; }
.meter i { height: 100%; background: repeating-linear-gradient(#5d636d 0 1px, transparent 1px 2.500px); position: relative; }
.meter i::after { content: ""; position: absolute; left: 0; right: 0; bottom: 0; height: 55%; background: repeating-linear-gradient(#b8d85a 0 1px, transparent 1px 2.500px); }
.mark { position: absolute; left: 1637px; top: 945px; display: flex; align-items: flex-start; }
.mark span { color: rgba(255,255,255,.45); font-size: 36px; font-weight: 700; line-height: 44px; margin: 11px 0 0 8px; white-space: nowrap; }
.scale { position: absolute; left: 1442px; top: 822px; width: 97px; height: 27px; text-align: center; font-weight: 700; color: #111; }
.scale::before { content: ""; position: absolute; left: 0; right: 0; top: 3px; bottom: 0; border-left: 1px solid #111; border-right: 1px solid #111; }
.s-top { font: 700 13px/14px "Liberation Serif", "Noto Sans CJK SC", serif; letter-spacing: .8px; height: 15px; border-bottom: 1px solid #444; }
.s-bot { font-size: 11.500px; line-height: 12px; }

/* status */
.status { height: 25px; flex: none; background: #2b579a; color: #fff; display: grid; grid-template-columns: 935px 90px 133px 20px 74px 19px 70px 21px 46px 18px 28px 92px 14px 92px 14px 120px; align-items: center; white-space: nowrap; position: relative; padding-bottom: 2px; }
.status span { overflow: hidden; }
.caret.light { border-top-color: #8fa4c4; display: block; }

/* ime */
.ime { position: absolute; right: 0; bottom: 0; display: flex; align-items: flex-end; }
.sogou { width: 26px; height: 26px; margin: 0 -5px 0 0; position: relative; z-index: 1; background: #f0501e; border-radius: 5px 3px 5px 5px; color: #fff; font: italic 700 22px/26px "Liberation Sans", sans-serif; text-align: center; transform: rotate(-8deg); }
.ime-bar { width: 183px; height: 23px; background: #fff; display: flex; align-items: center; padding-left: 7px; }
.ime-bar > * { width: 22px; flex: none; text-align: center; }
.ime-zh { font-size: 16px; font-weight: 700; color: #1d7fd6; line-height: 23px; }
.ime-pt { font-size: 15px; font-weight: 700; color: #1d7fd6; line-height: 20px; }

/* dialog */
.dialog { position: absolute; left: 747px; top: 253px; width: 426px; height: 527px; background: #f0f0f0; border: 1px solid #1a86d8; box-shadow: 0 2px 14px rgba(0,0,0,.25); font-size: 12px; }
.dlg-title { height: 29px; background: #fff; display: flex; align-items: center; justify-content: space-between; padding: 0 9px 0 8px; }
.dlg-title span { padding-bottom: 2px; }
.dlg-body { padding: 16px 0 0 12px; }
.dlg-cols { display: flex; }
.col { flex: none; }
.col label { height: 18px; line-height: 16px; }
.c1 { width: 172px; margin-right: 16px; } .c2 { width: 130px; margin-right: 17px; } .c3 { width: 63px; }
.dinput { height: 24px; background: #fff; border: 1px solid #0078d7; display: flex; align-items: center; padding: 0 3px; font-size: 13px; white-space: nowrap; overflow: hidden; }
.dinput span { line-height: 17px; padding-bottom: 1px; }
.c2 .dinput span, .c3 .dinput span { padding-left: 1px; }
.sel-text { background: #0078d7; color: #fff; width: 136px; height: 17px; overflow: hidden; letter-spacing: -.25px; }
.dlist { background: #fff; border: 1px solid #828790; display: flex; padding: 1px; overflow: hidden; }
.h136 { height: 136px; } .h122 { height: 122px; }
.rows { flex: 1; min-width: 0; overflow: hidden; }
.it { height: 19px; line-height: 19px; font-size: 15px; white-space: nowrap; overflow: hidden; padding-left: 1px; }
.it.cur { background: #0078d7; color: #fff; }
.garble { font: 900 10.500px/19px "DejaVu Sans", sans-serif; letter-spacing: .4px; padding-left: 1px; }
.onyx { font: 700 15px/19px "Liberation Serif", serif; color: #4a3108; letter-spacing: -.5px; transform: scaleX(.55); transform-origin: left center; }
.open { font-family: "Open Sans", sans-serif; font-size: 14.500px; }
.script { font: italic 9px/19px "Liberation Serif", serif; letter-spacing: .4px; }
.pala { font-family: "Liberation Serif", serif; font-size: 15px; }
.pan { font-family: "Noto Sans", sans-serif; font-size: 14.500px; }
.papy { font: 13px/19px "DejaVu Sans", sans-serif; letter-spacing: .3px; }
.style { font: 700 11px/19px "Noto Sans CJK SC", sans-serif; width: 109px; }
.size .it { height: 17px; line-height: 17px; font-size: 13px; padding-left: 5px; }
.size { flex: none; width: 42px; padding-top: 0; }
.rows.size { margin-right: 1px; }
.sb { width: 17px; flex: none; background: #f0f0f0; position: relative; margin-left: 1px; }
.thumb { position: absolute; left: 0; right: 0; background: #cdcdcd; }
.th1 { top: 69px; height: 17px; } .th2 { top: 22px; height: 19px; }
.ch { position: absolute; left: 4px; width: 8px; height: 8px; border-left: 2px solid #444; border-top: 2px solid #444; }
.ch.up { top: 8px; transform: rotate(45deg) scale(.9); }
.ch.down { bottom: 8px; transform: rotate(225deg) scale(.9); }
.sb.dim .ch { border-color: #c4c4c4; }
.dlg-lower { width: 210px; margin: 20px 0 0 188px; }
.sample { margin: 0; padding: 0; height: 82px; width: 210px; border: 1px solid #dcdcdc; position: relative; display: flex; align-items: center; justify-content: center; }
.sample legend { position: absolute; left: 8px; top: -9px; background: #f0f0f0; padding: 0; line-height: 16px; width: 26px; text-align: center; }
.sample div { font: 900 10px/14px "DejaVu Sans", sans-serif; letter-spacing: 1.300px; margin: 14px 0 0 0; }
.script-l { margin-top: 11px; height: 18px; line-height: 16px; }
.gray-b { margin-top: 4px; border-color: #7a7a7a; justify-content: space-between; padding-right: 6px; }
.more { display: block; width: max-content; margin-top: 70px; color: #0078d7; text-decoration: underline; line-height: 18px; }
.dlg-btns { margin: 17px 0 0 236px; display: flex; gap: 9px; }
.dbtn { width: 77px; height: 28px; background: #e1e1e1; border: 1px solid #adadad; line-height: 24px; }
.dbtn.ok { border: 2px solid #0078d7; }

.annot { position: absolute; left: 0; top: 0; pointer-events: none; }
```
